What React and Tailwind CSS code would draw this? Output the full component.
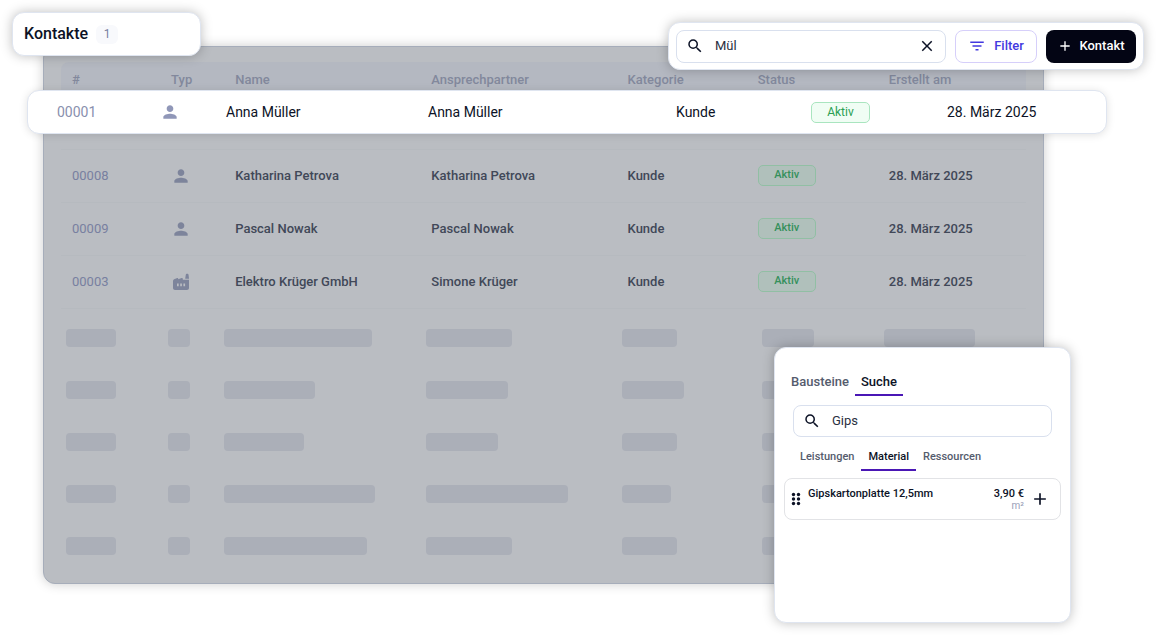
import { MdAdd, MdClose, MdFilterList, MdPerson, MdSearch } from "react-icons/md";

const contacts = [
  { id: "00008", type: "person", name: "Katharina Petrova", partner: "Katharina Petrova", category: "Kunde", status: "Aktiv", created: "28. März 2025" },
  { id: "00009", type: "person", name: "Pascal Nowak", partner: "Pascal Nowak", category: "Kunde", status: "Aktiv", created: "28. März 2025" },
  { id: "00003", type: "company", name: "Elektro Krüger GmbH", partner: "Simone Krüger", category: "Kunde", status: "Aktiv", created: "28. März 2025" },
];

// Placeholder bar widths, one array per row
const skeletonRows = [
  [50, 22, 148, 86, 55, 52, 91],
  [50, 22, 91, 82, 62, 52, 91],
  [50, 22, 80, 72, 55, 52, 91],
  [50, 22, 151, 142, 49, 52, 91],
  [50, 22, 143, 86, 55, 52, 91],
];

const FactoryIcon = ({ className }) => (
  <svg viewBox="0 0 18 18" fill="currentColor" aria-hidden="true" className={className}>
    <path
      fillRule="evenodd"
      d="M1 8c0-.8.4-1.400 1.100-1.700l3.200-1.200c.5-.2.9.1.9.6v.5l3.500-1.200c.6-.2 1.100.1 1.100.7v1.100H17V15c0 1.100-.9 2-2 2H3c-1.100 0-2-.9-2-2zM5 10.500v2.800h1.700v-2.800zm3.200 0v2.800h1.700v-2.800zm3.200 0v2.800h1.700v-2.800z"
    />
    <path d="M13.200 5.700l.6-4c.1-.6.4-.9.900-.9h.9c.5 0 .8.3.9.9l.5 4z" />
  </svg>
);

const GripIcon = ({ className }) => (
  <svg viewBox="0 0 10 14" fill="currentColor" aria-hidden="true" className={className}>
    <circle cx="2.500" cy="2.500" r="1.700" />
    <circle cx="7.500" cy="2.500" r="1.700" />
    <circle cx="2.500" cy="7" r="1.700" />
    <circle cx="7.500" cy="7" r="1.700" />
    <circle cx="2.500" cy="11.500" r="1.700" />
    <circle cx="7.500" cy="11.500" r="1.700" />
  </svg>
);

const ContactTable = () => (
  <section className="rounded-xl border border-[#a6adba] bg-[#babdc2] px-[17px] pt-[15px] pb-[28px] shadow-[0_0_12px_rgba(0,0,0,0.2)]">
    <table className="w-full table-fixed text-left text-[13px] font-medium">
      <thead>
        <tr className="h-[36px] text-[#82889c]">
          <th className="w-[99px] rounded-tl-lg bg-[#b4b8c1] pl-[11px] font-medium">#</th>
          <th className="w-[64px] bg-[#b4b8c1] pl-[11px] font-medium">Typ</th>
          <th className="w-[196px] bg-[#b4b8c1] pl-[11px] font-medium">Name</th>
          <th className="w-[196px] bg-[#b4b8c1] pl-[11px] font-medium">Ansprechpartner</th>
          <th className="w-[130px] bg-[#b4b8c1] pl-[11px] font-medium">Kategorie</th>
          <th className="w-[131px] bg-[#b4b8c1] pl-[11px] font-medium">Status</th>
          <th className="w-[148px] rounded-tr-lg bg-[#b4b8c1] pl-[11px] font-medium">Erstellt am</th>
        </tr>
      </thead>
      <tbody>
        {/* Slot of the highlighted contact */}
        <tr className="h-[51px] border-b border-[#b6babf]">
          <td colSpan={7} />
        </tr>
        {contacts.map((contact) => (
          <tr key={contact.id} className="h-[53px] border-b border-[#b6babf] text-[#414858]">
            <td className="pl-[11px] font-normal text-[#7880a0]">{contact.id}</td>
            <td className="pl-[11px] text-[#7d849b]">
              {contact.type === "person" ? <MdPerson className="size-5" /> : <FactoryIcon className="ml-px size-[18px]" />}
            </td>
            <td className="pl-[11px]">{contact.name}</td>
            <td className="pl-[11px]">{contact.partner}</td>
            <td className="pl-[11px]">{contact.category}</td>
            <td className="pl-[11px]">
              <span className="flex h-[21px] w-[58px] items-center justify-center rounded-[5px] border border-[#91bfa4] bg-[#b0c0bb] text-[11px] text-[#35905b]">
                {contact.status}
              </span>
            </td>
            <td className="pl-[11px]">{contact.created}</td>
          </tr>
        ))}
      </tbody>
    </table>

    <div className="flex flex-col gap-[34px] pt-[20px] pl-[5px]">
      {skeletonRows.map((row, index) => (
        <div key={index} className="grid grid-cols-[102fr_56fr_202fr_196fr_140fr_122fr_142fr]">
          {row.map((width, col) => (
            <div key={col} className="h-[18px] rounded bg-[#abafb8]" style={{ width }} />
          ))}
        </div>
      ))}
    </div>
  </section>
);

const HighlightedContact = () => (
  <article className="absolute top-[90px] right-[50px] left-[27px] grid h-[44px] grid-cols-[103fr_66fr_202fr_248fr_135fr_136fr_159fr] items-center rounded-xl border border-[#dfe5f0] bg-white pl-[29px] text-sm text-[#0c1226] shadow-[0_1px_8px_rgba(0,0,0,0.12)]">
    <span className="text-[#8990ae]">00001</span>
    <MdPerson className="size-5 text-[#9097b8]" />
    <span>Anna Müller</span>
    <span>Anna Müller</span>
    <span>Kunde</span>
    <span className="flex h-[21px] w-[59px] items-center justify-center rounded-[5px] border border-[#a9e5bf] bg-[#f0fdf4] text-xs text-[#2a9f52]">
      Aktiv
    </span>
    <span>28. März 2025</span>
  </article>
);

const TitleCard = () => (
  <header className="absolute top-[12px] left-[12px] flex h-[44px] w-[189px] items-center gap-2 rounded-xl border border-[#dfe5f0] bg-white pl-[11px] shadow-[0_0_12px_rgba(0,0,0,0.25)]">
    <h1 className="text-base font-medium text-[#0c1226]">Kontakte</h1>
    <span className="flex h-[19px] w-[22px] items-center justify-center rounded-md bg-[#f8f9fc] text-xs text-[#7780a0]">1</span>
  </header>
);

const Toolbar = () => (
  <div className="absolute top-[22px] right-[13px] flex h-[48px] w-[476px] items-center gap-[9px] rounded-xl border border-[#dfe5f0] bg-white px-[7px] shadow-[0_0_12px_rgba(0,0,0,0.25)]">
    <label className="flex h-[33px] min-w-0 flex-1 items-center rounded-lg border border-[#d9e0ee] px-[9px] text-[#0c1226]">
      <MdSearch className="size-[18px] shrink-0" />
      <input aria-label="Kontakte suchen" defaultValue="Mül" className="ml-[11px] min-w-0 flex-1 text-[13px] text-[#2a3042] outline-none" />
      <button aria-label="Suche leeren">
        <MdClose className="size-[18px]" />
      </button>
    </label>
    <button className="flex h-[33px] w-[82px] items-center justify-center gap-2 rounded-lg border border-[#d6cffa] text-[13px] font-medium text-[#4338e0]">
      <MdFilterList className="size-[18px]" />
      Filter
    </button>
    <button className="flex h-[33px] w-[90px] items-center justify-center gap-[6px] rounded-lg bg-[#030514] text-[13px] font-medium text-white">
      <MdAdd className="size-4" />
      Kontakt
    </button>
  </div>
);

const SearchPanel = () => (
  <aside className="absolute top-[347px] right-[86px] h-[276px] w-[297px] rounded-xl border border-[#dfe5f0] bg-white px-[9px] pt-5 shadow-[0_0_12px_rgba(0,0,0,0.25)]">
    <nav className="flex pl-px text-[13px] font-medium text-[#555c6d]">
      <button className="h-[28px] border-b-2 border-transparent px-[6px] pt-[2px]">Bausteine</button>
      <button className="h-[28px] border-b-2 border-[#4a17b5] px-[6px] pt-[2px] text-[#0c1226]">Suche</button>
    </nav>

    <label className="mx-[9px] mt-[9px] flex h-[32px] items-center rounded-lg border border-[#d9e0ee] px-[9px] text-[#0c1226]">
      <MdSearch className="size-[18px] shrink-0" />
      <input aria-label="Material suchen" defaultValue="Gips" className="ml-[11px] min-w-0 flex-1 text-[13px] text-[#2a3042] outline-none" />
    </label>

    <nav className="mt-[6px] flex pl-[9px] text-[11px] font-medium text-[#555c6d]">
      <button className="h-[28px] border-b-2 border-transparent px-[7px] pt-[3px]">Leistungen</button>
      <button className="h-[28px] border-b-2 border-[#4a17b5] px-[7px] pt-[3px] text-[#0c1226]">Material</button>
      <button className="h-[28px] border-b-2 border-transparent px-[7px] pt-[3px]">Ressourcen</button>
    </nav>

    <div className="mt-[7px] flex h-[42px] items-center rounded-lg border border-[#e2e3e6] pl-[6px] text-[11px] leading-4 text-[#0c1226]">
      <GripIcon className="h-[14px] w-[10px]" />
      <span className="ml-[7px] flex-1 self-start pt-[7px] font-medium">Gipskartonplatte 12,5mm</span>
      <span className="flex flex-col items-end self-start pt-[7px]">
        <span className="font-medium">3,90 €</span>
        <span className="text-[10px] leading-[8px] text-[#9aa0b8]">m²</span>
      </span>
      <button aria-label="Hinzufügen" className="mr-[10px] ml-[6px]">
        <MdAdd className="size-5" />
      </button>
    </div>
  </aside>
);

const App = () => {
  return (
    <main className="relative min-h-screen bg-white pt-[46px] pr-[113px] pl-[43px] font-[Roboto,sans-serif]">
      <ContactTable />
      <HighlightedContact />
      <TitleCard />
      <Toolbar />
      <SearchPanel />
    </main>
  );
};

export default App;
